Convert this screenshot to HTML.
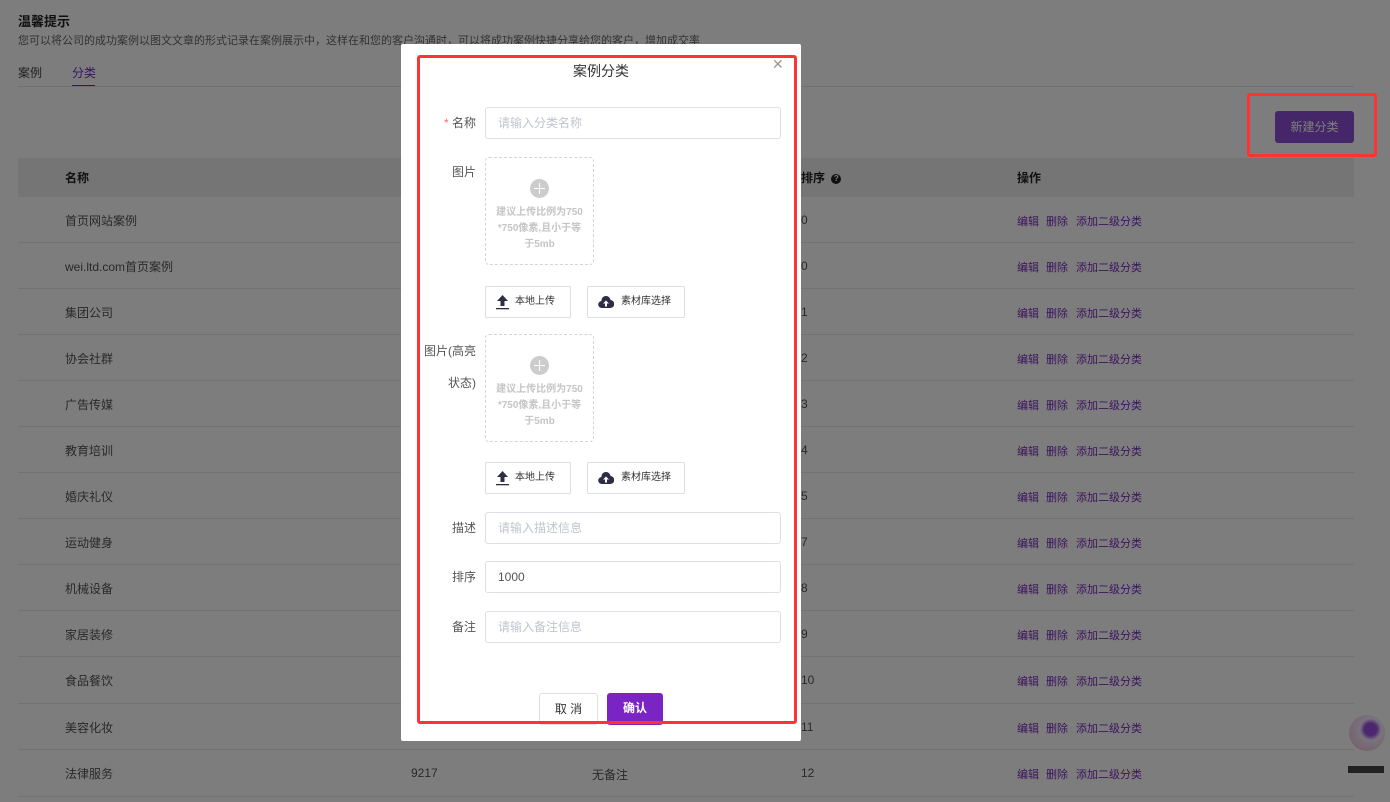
<!DOCTYPE html>
<html><head><meta charset="utf-8"><style>
*{margin:0;padding:0;box-sizing:border-box}
body{width:1390px;height:802px;overflow:hidden;background:#fff;font-family:"Liberation Sans","Noto Sans CJK SC",sans-serif;font-size:12px;color:#333;position:relative}
.a{position:absolute;white-space:nowrap}
.row{position:absolute;left:18px;width:1336px;height:46px;border-bottom:1px solid #e8e8e8}
.row span{position:absolute;top:15px;font-size:12px;color:#555}
.row span.n{top:16px}
.row .l{color:#7b2bc0;font-size:11px;top:16px}
#ov{position:absolute;left:0;top:0;width:1390px;height:802px;background:rgba(0,0,0,.51)}
#dlg{position:absolute;left:401px;top:44px;width:400px;height:697px;background:#fff;border-radius:2px}
.lab{position:absolute;right:325px;font-size:12px;color:#555;text-align:right}
.inp{position:absolute;left:84px;width:296px;height:32px;border:1px solid #dcdfe6;border-radius:3px;padding-left:12px;line-height:30px;color:#c0c4cc;font-size:12px}
.box{position:absolute;left:84px;width:109px;height:108px;border:1px dashed #d5d5d5;border-radius:4px;text-align:center;color:#c5c5c5;font-size:10px;font-weight:bold;line-height:16px}
.box .p{width:19px;height:19px;border-radius:50%;background:#ccc;margin:21px auto 7px;position:relative}
.box .p:before,.box .p:after{content:"";position:absolute;background:#fff;left:4px;top:9px;width:11px;height:1px}
.box .p:after{left:9px;top:4px;width:1px;height:11px}
.btn{position:absolute;height:32px;border:1px solid #dcdfe6;border-radius:2px;font-size:10px;color:#333;line-height:30px}
</style></head><body>
<div class="a" style="left:18px;top:11px;font-size:13px;font-weight:bold;color:#222">温馨提示</div>
<div class="a" style="left:18px;top:32px;font-size:11px;color:#666">您可以将公司的成功案例以图文文章的形式记录在案例展示中，这样在和您的客户沟通时，可以将成功案例快捷分享给您的客户，增加成交率</div>
<div class="a" style="left:18px;top:64px;font-size:12px;color:#444">案例</div>
<div class="a" style="left:72px;top:64px;font-size:12px;color:#7b2bc0">分类</div>
<div class="a" style="left:72px;top:85px;width:23px;height:2px;background:#7b2bc0"></div>
<div class="a" style="left:18px;top:86px;width:1336px;height:1px;background:#e4e4e4"></div>
<div class="a" style="left:1275px;top:111px;width:79px;height:32px;background:#8e4ed6;border-radius:3px;color:#fff;font-size:12px;text-align:center;line-height:32px">新建分类</div>
<div class="a" style="left:18px;top:158px;width:1336px;height:39px;background:#eee"></div>
<div class="a" style="left:65px;top:169px;font-weight:bold;font-size:12px;color:#222">名称</div>
<div class="a" style="left:801px;top:169px;font-weight:bold;font-size:12px;color:#222">排序 <span style="display:inline-block;width:10px;height:10px;border-radius:50%;background:#222;color:#fff;font-size:8px;text-align:center;line-height:10px;vertical-align:1px;margin-left:3px">?</span></div>
<div class="a" style="left:1017px;top:169px;font-weight:bold;font-size:12px;color:#222">操作</div>

<div class="row" style="top:197px"><span style="left:47px">首页网站案例</span><span class="n" style="left:783px">0</span><span class="l" style="left:999px">编辑</span><span class="l" style="left:1028px">删除</span><span class="l" style="left:1058px">添加二级分类</span></div>
<div class="row" style="top:243px"><span style="left:47px">wei.ltd.com首页案例</span><span class="n" style="left:783px">0</span><span class="l" style="left:999px">编辑</span><span class="l" style="left:1028px">删除</span><span class="l" style="left:1058px">添加二级分类</span></div>
<div class="row" style="top:289px"><span style="left:47px">集团公司</span><span class="n" style="left:783px">1</span><span class="l" style="left:999px">编辑</span><span class="l" style="left:1028px">删除</span><span class="l" style="left:1058px">添加二级分类</span></div>
<div class="row" style="top:335px"><span style="left:47px">协会社群</span><span class="n" style="left:783px">2</span><span class="l" style="left:999px">编辑</span><span class="l" style="left:1028px">删除</span><span class="l" style="left:1058px">添加二级分类</span></div>
<div class="row" style="top:381px"><span style="left:47px">广告传媒</span><span class="n" style="left:783px">3</span><span class="l" style="left:999px">编辑</span><span class="l" style="left:1028px">删除</span><span class="l" style="left:1058px">添加二级分类</span></div>
<div class="row" style="top:427px"><span style="left:47px">教育培训</span><span class="n" style="left:783px">4</span><span class="l" style="left:999px">编辑</span><span class="l" style="left:1028px">删除</span><span class="l" style="left:1058px">添加二级分类</span></div>
<div class="row" style="top:473px"><span style="left:47px">婚庆礼仪</span><span class="n" style="left:783px">5</span><span class="l" style="left:999px">编辑</span><span class="l" style="left:1028px">删除</span><span class="l" style="left:1058px">添加二级分类</span></div>
<div class="row" style="top:519px"><span style="left:47px">运动健身</span><span class="n" style="left:783px">7</span><span class="l" style="left:999px">编辑</span><span class="l" style="left:1028px">删除</span><span class="l" style="left:1058px">添加二级分类</span></div>
<div class="row" style="top:565px"><span style="left:47px">机械设备</span><span class="n" style="left:783px">8</span><span class="l" style="left:999px">编辑</span><span class="l" style="left:1028px">删除</span><span class="l" style="left:1058px">添加二级分类</span></div>
<div class="row" style="top:611px"><span style="left:47px">家居装修</span><span class="n" style="left:783px">9</span><span class="l" style="left:999px">编辑</span><span class="l" style="left:1028px">删除</span><span class="l" style="left:1058px">添加二级分类</span></div>
<div class="row" style="top:657px;height:47px"><span style="left:47px">食品餐饮</span><span class="n" style="left:783px">10</span><span class="l" style="left:999px">编辑</span><span class="l" style="left:1028px">删除</span><span class="l" style="left:1058px">添加二级分类</span></div>
<div class="row" style="top:704px"><span style="left:47px">美容化妆</span><span class="n" style="left:783px">11</span><span class="l" style="left:999px">编辑</span><span class="l" style="left:1028px">删除</span><span class="l" style="left:1058px">添加二级分类</span></div>
<div class="row" style="top:750px;height:47px"><span style="left:47px">法律服务</span><span class="n" style="left:393px">9217</span><span class="n" style="left:574px">无备注</span><span class="n" style="left:783px">12</span><span class="l" style="left:999px">编辑</span><span class="l" style="left:1028px">删除</span><span class="l" style="left:1058px">添加二级分类</span></div>

<div class="a" style="left:1349px;top:715px;width:36px;height:36px;border-radius:50%;background:radial-gradient(circle at 60% 40%,#9b4fe0 0 20%,#f4eaff 35%,#f1c6dc 80%)"></div>
<div class="a" style="left:1348px;top:766px;width:36px;height:7px;background:#444"></div>

<div id="ov"></div>
<div id="dlg">
 <div class="a" style="left:0;width:400px;top:17px;text-align:center;font-size:14px;color:#333">案例分类</div>
 <div class="a" style="left:371px;top:12px;font-size:14px;color:#999">✕</div>
 <div class="lab" style="top:70px"><span style="color:#f56c6c">* </span>名称</div>
 <div class="inp" style="top:63px">请输入分类名称</div>
 <div class="lab" style="top:119px">图片</div>
 <div class="box" style="top:113px"><div class="p"></div>建议上传比例为750<br>*750像素,且小于等<br>于5mb</div>
 <div class="btn" style="left:84px;top:242px;width:86px"><svg style="position:absolute;left:9px;top:7px" width="15" height="16" viewBox="0 0 15 16"><path d="M7.5 1L2 7h3.5v5h4V7H13z" fill="#2d2d44"/><rect x="1" y="14" width="13" height="1.3" fill="#2d2d44"/></svg><span style="position:absolute;left:29px">本地上传</span></div>
 <div class="btn" style="left:186px;top:242px;width:98px"><svg style="position:absolute;left:10px;top:7px" width="16" height="16" viewBox="0 0 16 16"><path d="M4 14a3.5 3.5 0 0 1-.5-7A4.5 4.5 0 0 1 12.5 6 3.5 3.5 0 0 1 12 14z" fill="#2d2d44"/><path d="M8 6.5l-3 3h2v3h2v-3h2z" fill="#fff"/></svg><span style="position:absolute;left:33px">素材库选择</span></div>
 <div class="lab" style="top:298px">图片(高亮</div>
 <div class="lab" style="top:330px">状态)</div>
 <div class="box" style="top:290px"><div class="p"></div>建议上传比例为750<br>*750像素,且小于等<br>于5mb</div>
 <div class="btn" style="left:84px;top:418px;width:86px"><svg style="position:absolute;left:9px;top:7px" width="15" height="16" viewBox="0 0 15 16"><path d="M7.5 1L2 7h3.5v5h4V7H13z" fill="#2d2d44"/><rect x="1" y="14" width="13" height="1.3" fill="#2d2d44"/></svg><span style="position:absolute;left:29px">本地上传</span></div>
 <div class="btn" style="left:186px;top:418px;width:98px"><svg style="position:absolute;left:10px;top:7px" width="16" height="16" viewBox="0 0 16 16"><path d="M4 14a3.5 3.5 0 0 1-.5-7A4.5 4.5 0 0 1 12.5 6 3.5 3.5 0 0 1 12 14z" fill="#2d2d44"/><path d="M8 6.5l-3 3h2v3h2v-3h2z" fill="#fff"/></svg><span style="position:absolute;left:33px">素材库选择</span></div>
 <div class="lab" style="top:475px">描述</div>
 <div class="inp" style="top:468px">请输入描述信息</div>
 <div class="lab" style="top:524px">排序</div>
 <div class="inp" style="top:517px;color:#555">1000</div>
 <div class="lab" style="top:574px">备注</div>
 <div class="inp" style="top:567px">请输入备注信息</div>
 <div class="btn" style="left:138px;top:649px;width:59px;text-align:center;font-size:12px;border-radius:3px">取 消</div>
 <div class="a" style="left:206px;top:649px;width:56px;height:32px;background:#7b24c4;border-radius:3px;color:#fff;font-weight:bold;text-align:center;line-height:30px;font-size:12px">确认</div>
 <div class="a" style="left:16px;top:11px;width:380px;height:669px;border:3px solid #f33;border-radius:3px"></div>
</div>
<div class="a" style="left:1247px;top:93px;width:130px;height:64px;border:3px solid #f33;border-radius:3px"></div>
</body></html>
